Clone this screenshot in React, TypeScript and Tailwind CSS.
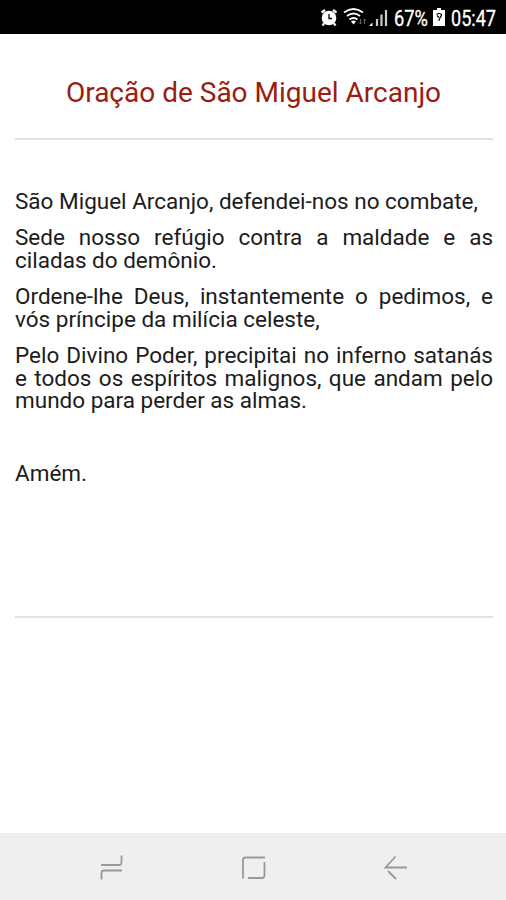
function StatusBar() {
  return (
    <header className="flex h-[34px] shrink-0 items-center justify-end bg-black pr-[9px] text-white">
      <svg width="73" height="34" viewBox="0 0 73 34" fill="none" stroke="white">
        <circle cx="8" cy="18" r="7.3" fill="white" stroke="none" />
        <path d="M.5 12.500 4 10M15.500 12.500 12 10M3 23.500l-1.500 2M13 23.500l1.500 2" strokeWidth="2.2" />
        <path d="M8 14v4.500h3" stroke="black" strokeWidth="1.3" />
        <path d="M23 12.500q9.500-7 19 0M26 16q6.500-5 13 0M28.500 19.500q4-3 8 0" strokeWidth="1.8" />
        <path d="M30 21.500q2.500-2 5 0L32.500 24.500z" fill="white" stroke="none" />
        <path d="M39.500 19v5M38 22.500l1.500 1.500 1.500-1.500M43.500 24v-5M42 20.500 43.500 19l1.500 1.500" stroke="#666" />
        <path d="M48 26l3.500-3.500V26z" fill="white" stroke="none" />
        <path d="M56 19V26M60.500 14.500V26M65 10v16" strokeWidth="2.2" stroke="#ccc" />
      </svg>
      <Label text="67%" className="w-[34px]" length={34} />
      <svg className="ml-[5px]" width="12" height="34" viewBox="0 0 12 34">
        <path d="M4 8h4v2h4v16H0V10H4z" fill="white" />
        <path d="M3.500 14.500q2.500-2 5 0c0 3-2.500 3-2.500 6.500M4 15.500l2 2" fill="none" stroke="black" strokeWidth="1.2" />
      </svg>
      <Label text="05:47" className="ml-[6px] w-[46px]" length={45} />
    </header>
  );
}

function Label({ text, className, length }: { text: string; className: string; length: number }) {
  return (
    <svg className={`${className} h-[34px] overflow-visible`}>
      <text x="0" y="26" fill="white" stroke="white" strokeWidth="0.3" fontSize="21.5" textLength={length} lengthAdjust="spacingAndGlyphs">
        {text}
      </text>
    </svg>
  );
}

function NavBar() {
  return (
    <nav className="flex h-[67px] shrink-0 items-center bg-[#efefef] pl-[100px] text-[#999]">
      <svg width="24" height="26" viewBox="0 0 24 26" fill="none" stroke="currentColor" strokeWidth="1.8">
        <path d="M1 11h18q2.500 0 2.500-2.500V1.500M22 16.500H4q-2.500 0-2.500 2.500v6.500" />
      </svg>
      <svg className="ml-[117px]" width="26" height="26" viewBox="0 0 26 26" fill="none" stroke="currentColor" strokeWidth="1.8">
        <path d="M2 24.500V6q0-2.500 2.500-2.500H24M23.500 8v13.500q0 2.500-2.500 2.500H7" />
      </svg>
      <svg className="ml-[116px]" width="26" height="26" viewBox="0 0 26 26" fill="none" stroke="currentColor" strokeWidth="1.8">
        <path d="M24 13.500H2.500L12.500 2.500M5 17l8 8" />
      </svg>
    </nav>
  );
}

function App() {
  return (
    <div className="flex h-[900px] w-[506px] flex-col overflow-hidden bg-white font-['Roboto',sans-serif]">
      <StatusBar />
      <main className="flex-1 pt-[39px] pr-[13px] pl-[15px]">
        <h1 className="-ml-px text-center text-[28px] leading-[40px] text-[#9b1c10]">
          Oração de São Miguel Arcanjo
        </h1>
        <hr className="mt-[25px] border-t-2 border-[#e2e2e2]" />
        <div className="mt-[49.5px] flex flex-col gap-[14px] text-justify text-[22.5px] leading-[22.5px] text-[#1c1c1c]">
          <p>São Miguel Arcanjo, defendei-nos no combate,</p>
          <p>Sede nosso refúgio contra a maldade e as ciladas do demônio.</p>
          <p>Ordene-lhe Deus, instantemente o pedimos, e vós príncipe da milícia celeste,</p>
          <p>Pelo Divino Poder, precipitai no inferno satanás e todos os espíritos malignos, que andam pelo mundo para perder as almas.</p>
          <p className="mt-[36px]">Amém.</p>
        </div>
        <hr className="mt-[132px] border-t-2 border-[#e2e2e2]" />
      </main>
      <NavBar />
    </div>
  );
}

export default App;
